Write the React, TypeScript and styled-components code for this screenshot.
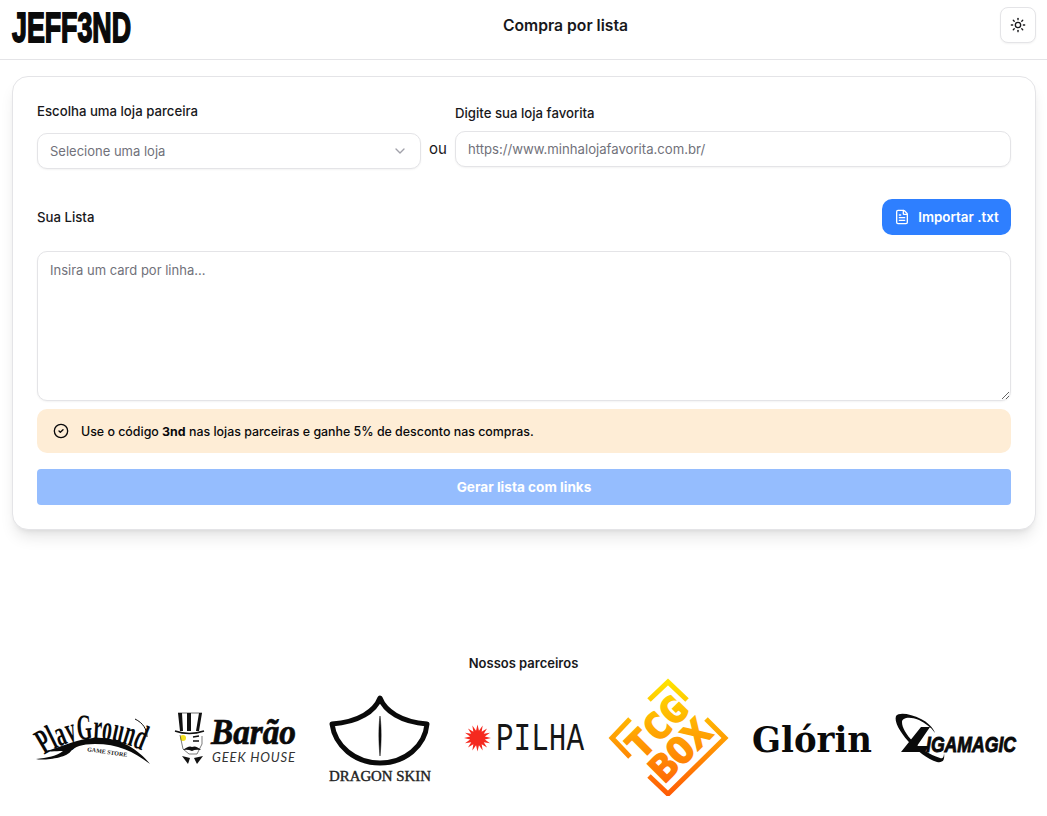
import React from "react";
import styled, { createGlobalStyle } from "styled-components";
import { ChevronDown, CircleCheck, FileText, Sun } from "lucide-react";

const Global = createGlobalStyle`
  html, body { margin: 0; padding: 0; background: #fff; }
  body { font-family: Inter, "Noto Sans", sans-serif; color: #18181b; }
  * { box-sizing: border-box; }
`;

const Header = styled.header`
  height: 60px;
  padding: 7px 11px 0 12px;
  display: flex;
  justify-content: space-between;
  align-items: flex-start;
  border-bottom: 1px solid #e4e4e7;
`;
const LogoSlot = styled.div`
  width: 119px;
  height: 36px;
  display: flex;
  align-items: center;
`;
const Title = styled.h1`
  margin: 0;
  font-size: 15.7px;
  line-height: 38px;
  font-weight: 600;
  color: #18181b;
`;
const IconButton = styled.button`
  width: 36px;
  height: 36px;
  padding: 0;
  display: flex;
  align-items: center;
  justify-content: center;
  background: #fff;
  color: #18181b;
  border: 1px solid #e4e4e7;
  border-radius: 8px;
  box-shadow: 0 1px 2px rgba(0, 0, 0, 0.05);
`;
const Card = styled.main`
  margin: 16px 11px 0 12px;
  padding: 24px;
  border: 1px solid #e4e4e7;
  border-radius: 16px;
  background: #fff;
  box-shadow: 0 10px 15px -3px rgba(0, 0, 0, 0.1), 0 4px 6px -4px rgba(0, 0, 0, 0.1);
`;
const StoreRow = styled.div`
  display: flex;
  align-items: center;
  gap: 8px;
`;
const Field = styled.div<{ $gap: number; $width?: number }>`
  display: flex;
  flex-direction: column;
  gap: ${(p) => p.$gap}px;
  ${(p) => (p.$width ? `width: ${p.$width}px;` : "flex: 1;")}
`;
const Label = styled.label`
  font-size: 13.2px;
  line-height: 20px;
  font-weight: 500;
  color: #18181b;
`;
const SelectBox = styled.div`
  height: 36px;
  padding: 0 12px;
  display: flex;
  align-items: center;
  justify-content: space-between;
  font-size: 13px;
  color: #71717a;
  background: #fff;
  border: 1px solid #e4e4e7;
  border-radius: 10px;
  box-shadow: 0 1px 2px rgba(0, 0, 0, 0.05);
  svg { color: #a1a1aa; }
`;
const Or = styled.span`
  width: 18px;
  font-size: 15px;
  line-height: 20px;
  margin-top: 27px;
  color: #18181b;
`;
const TextInput = styled.input`
  height: 36px;
  width: 100%;
  padding: 0 12px;
  font: 13.15px Inter, sans-serif;
  background: #fff;
  border: 1px solid #e4e4e7;
  border-radius: 10px;
  box-shadow: 0 1px 2px rgba(0, 0, 0, 0.05);
  outline: none;
  &::placeholder { color: #71717a; opacity: 1; }
`;
const ListHead = styled.div`
  margin-top: 30px;
  display: flex;
  align-items: center;
  justify-content: space-between;
`;
const ImportButton = styled.button`
  height: 36px;
  width: 129px;
  display: flex;
  align-items: center;
  justify-content: center;
  gap: 8px;
  padding: 0;
  font: 600 13.4px Inter, sans-serif;
  color: #fff;
  background: #2e7fff;
  border: none;
  border-radius: 10px;
`;
const ListArea = styled.textarea`
  display: block;
  margin-top: 16px;
  width: 100%;
  height: 150px;
  padding: 8px 12px;
  font: 13px/20px Inter, sans-serif;
  background: #fff;
  border: 1px solid #e4e4e7;
  border-radius: 10px;
  box-shadow: 0 1px 2px rgba(0, 0, 0, 0.05);
  outline: none;
  &::placeholder { color: #71717a; opacity: 1; }
`;
const Notice = styled.div`
  margin-top: 8px;
  height: 44px;
  padding: 0 16px;
  display: flex;
  align-items: center;
  gap: 12px;
  font-size: 12.4px;
  font-weight: 500;
  color: #09090b;
  background: #feedd6;
  border-radius: 10px;
  b { font-weight: 700; }
`;
const Generate = styled.button`
  display: block;
  margin-top: 16px;
  width: 100%;
  height: 36px;
  padding: 0;
  font: 700 13.6px Inter, sans-serif;
  color: #fff;
  background: #95bdfe;
  border: none;
  border-radius: 4px;
`;
const Partners = styled.section`
  margin-top: 123px;
  display: flex;
  flex-direction: column;
  align-items: center;
  gap: 7px;
`;
const PartnersTitle = styled.h2`
  margin: 0;
  font-size: 13px;
  line-height: 20px;
  font-weight: 600;
  color: #18181b;
`;
const PartnerGrid = styled.div`
  display: grid;
  grid-template-columns: repeat(7, 144px);
  height: 116px;
  align-items: center;
  justify-items: center;
  svg { overflow: visible; }
`;

const JeffLogo = () => (
  <svg width="119" height="34" viewBox="0 0 119 34" style={{ overflow: "visible" }}>
    <text x="0" y="33.5" fontFamily="Liberation Sans, sans-serif" fontWeight="700" fontSize="42" textLength="119" lengthAdjust="spacingAndGlyphs" fill="#0a0a0a" stroke="#0a0a0a" strokeWidth="1.8">JEFF3ND</text>
  </svg>
);

const Playground = () => (
  <svg width="118" height="54" viewBox="0 0 118 54">
    <defs>
      <path id="pgArc" d="M11 44 C 28 33, 44 28, 58 28 S 92 31, 114 42" />
    </defs>
    <text fontFamily="Liberation Serif, serif" fontWeight="700" fontSize="36" fill="#0a0a0a">
      <textPath href="#pgArc" textLength="103" lengthAdjust="spacingAndGlyphs">PlayGround</textPath>
    </text>
    <path d="M14 40 C 30 35, 45 28, 60 27 C 85 25, 105 38, 117 53 C 100 40, 85 33, 62 33 C 48 33, 42 36, 38 40 C 34 47, 10 50, 3 48 C 14 47, 24 45, 30 40 C 24 40, 18 41, 14 40 Z" fill="#0a0a0a" />
    <path d="M102 8 C 110 12, 114 18, 114 26" fill="none" stroke="#0a0a0a" strokeWidth="1" />
    <text x="74" y="43" textAnchor="middle" fontFamily="Liberation Serif, serif" fontWeight="700" fontSize="6" fill="#222" transform="rotate(8 74 43)">GAME STORE</text>
  </svg>
);

const Barao = () => (
  <svg width="121" height="54" viewBox="0 0 121 54">
    <path d="M3 2 h4 l1 18 h-3 Z M12 2 h4 v18 h-4 Z M24 2 h3 l-3 18 h-3 Z" fill="#111" />
    <path d="M3 2 H27" fill="none" stroke="#111" strokeWidth="0.6" />
    <path d="M0 20 Q14 25 29 20" fill="none" stroke="#111" strokeWidth="1.4" />
    <circle cx="8" cy="27" r="3" fill="#f5e11d" />
    <path d="M5 24 L8 38 L14 43 L22 43 L27 33 L27 25" fill="none" stroke="#444" strokeWidth="0.7" />
    <path d="M18 26 l6 -1 M18 30 l6 0" stroke="#111" strokeWidth="1.4" />
    <path d="M8 39 Q14 34 17 36 Q21 34 26 39 Q20 38 17 40 Q13 38 8 39 Z" fill="#111" />
    <path d="M7 45 L15 47 L13 53 Z M28 45 L19 47 L22 53 Z" fill="#111" />
    <text x="36" y="33" fontFamily="Liberation Serif, serif" fontWeight="700" fontStyle="italic" fontSize="36" textLength="85" lengthAdjust="spacingAndGlyphs" fill="#0a0a0a" stroke="#0a0a0a" strokeWidth="0.7">Barão</text>
    <text x="37" y="51" fontFamily="Lato, sans-serif" fontStyle="italic" fontSize="13" textLength="83" lengthAdjust="spacing" fill="#333">GEEK HOUSE</text>
  </svg>
);

const DragonSkin = () => (
  <svg width="102" height="92" viewBox="0 0 102 92">
    <path d="M51 6 C 56 19, 72 30, 98 32 C 96 54, 76 71, 51 71 C 26 71, 6 54, 3 32 C 30 30, 46 19, 51 6 Z" fill="none" stroke="#0a0a0a" strokeWidth="5" strokeLinejoin="round" />
    <path d="M51 24 C 52.5 35, 52.5 50, 51 64 C 49.5 50, 49.5 35, 51 24 Z" fill="#0a0a0a" stroke="#0a0a0a" strokeWidth="0.5" />
    <text x="0" y="89" fontFamily="Liberation Serif, serif" fontSize="15" textLength="102" lengthAdjust="spacingAndGlyphs" fill="#222" stroke="#222" strokeWidth="0.4">DRAGON SKIN</text>
  </svg>
);

const starPoints = Array.from({ length: 32 }, (_, i) => {
  const r = i % 2 === 0 ? 13.5 : 7.5;
  const a = (i * Math.PI) / 16;
  return `${13.5 + r * Math.cos(a)},${15 + r * Math.sin(a)}`;
}).join(" ");

const Pilha = () => (
  <svg width="120" height="30" viewBox="0 0 120 30">
    <polygon points={starPoints} fill="#f5291f" />
    <text x="32" y="27" fontFamily="Liberation Mono, monospace" fontSize="38" textLength="88" lengthAdjust="spacingAndGlyphs" fill="#161616">PILHA</text>
  </svg>
);

const TcgBox = () => (
  <svg width="116" height="116" viewBox="0 0 116 116">
    <defs>
      <linearGradient id="tcgA" gradientUnits="userSpaceOnUse" x1="0" y1="0" x2="0" y2="116">
        <stop offset="0" stopColor="#ffe400" />
        <stop offset="1" stopColor="#ff5a05" />
      </linearGradient>
      <linearGradient id="tcgB" gradientUnits="userSpaceOnUse" x1="0" y1="0" x2="0" y2="116" gradientTransform="rotate(45 58 58)">
        <stop offset="0" stopColor="#ffe400" />
        <stop offset="1" stopColor="#ff5a05" />
      </linearGradient>
    </defs>
    <g fill="none" stroke="url(#tcgA)" strokeWidth="5">
      <path d="M39 20 L58 2 L77 20" />
      <path d="M20 39 L2 58 L20 77" />
      <path d="M96 39 L115 58 L58 114 L39 96" />
    </g>
    <g transform="rotate(-45 58 58)" fontFamily="DejaVu Sans Mono, monospace" fontWeight="700" fontSize="36" fill="url(#tcgB)" textAnchor="middle" stroke="url(#tcgB)" strokeWidth="1.6">
      <text x="58" y="55" textLength="70" lengthAdjust="spacingAndGlyphs">TCG</text>
      <text x="58" y="88" textLength="70" lengthAdjust="spacingAndGlyphs">BOX</text>
    </g>
  </svg>
);

const Glorin = () => (
  <svg width="120" height="32" viewBox="0 0 120 32">
    <text x="0" y="30" fontFamily="DejaVu Serif, serif" fontWeight="700" fontSize="35" textLength="120" lengthAdjust="spacingAndGlyphs" fill="#0a0a0a">Glórin</text>
  </svg>
);

const Ligamagic = () => (
  <svg width="121" height="50" viewBox="0 0 121 50">
    <path d="M1 3 C 4 -1, 16 1, 26 6 C 32 9, 38 14, 40 20 C 36 14, 30 10, 24 7 C 14 3, 7 5, 7 9 C 7 20, 24 38, 45 45 C 47 46, 49 45, 49 40 C 50 47, 48 50, 42 49 C 24 44, -3 14, 1 3 Z" fill="#0a0a0a" />
    <path d="M6 39 L26 14 L35 14 L22 33 L34 33 L30 39 Z" fill="#0a0a0a" />
    <text x="31" y="39" fontFamily="Liberation Sans, sans-serif" fontWeight="700" fontStyle="italic" fontSize="22" textLength="90" lengthAdjust="spacingAndGlyphs" fill="#0a0a0a" stroke="#0a0a0a" strokeWidth="0.9">IGAMAGIC</text>
  </svg>
);

export default function App() {
  return (
    <>
      <Global />
      <Header>
        <LogoSlot><JeffLogo /></LogoSlot>
        <Title>Compra por lista</Title>
        <IconButton aria-label="Tema"><Sun size={16} strokeWidth={2} /></IconButton>
      </Header>
      <Card>
        <StoreRow>
          <Field $gap={12} $width={384}>
            <Label>Escolha uma loja parceira</Label>
            <SelectBox>
              <span>Selecione uma loja</span>
              <ChevronDown size={16} />
            </SelectBox>
          </Field>
          <Or>ou</Or>
          <Field $gap={8}>
            <Label>Digite sua loja favorita</Label>
            <TextInput placeholder="https://www.minhalojafavorita.com.br/" />
          </Field>
        </StoreRow>
        <ListHead>
          <Label>Sua Lista</Label>
          <ImportButton><FileText size={16} />Importar .txt</ImportButton>
        </ListHead>
        <ListArea placeholder="Insira um card por linha..." />
        <Notice>
          <CircleCheck size={16} />
          <span>Use o código <b>3nd</b> nas lojas parceiras e ganhe 5% de desconto nas compras.</span>
        </Notice>
        <Generate>Gerar lista com links</Generate>
      </Card>
      <Partners>
        <PartnersTitle>Nossos parceiros</PartnersTitle>
        <PartnerGrid>
          <Playground />
          <Barao />
          <DragonSkin />
          <Pilha />
          <TcgBox />
          <Glorin />
          <Ligamagic />
        </PartnerGrid>
      </Partners>
    </>
  );
}
